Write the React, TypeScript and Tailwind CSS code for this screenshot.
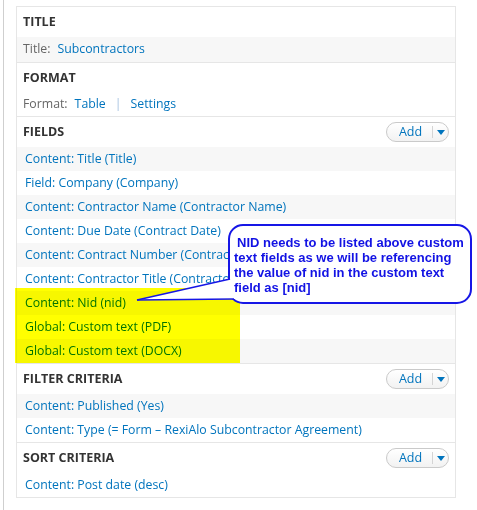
import React from 'react';

type Row = { text: string };

function AddButton() {
  return (
    <div className="flex h-[20px] w-[63px] items-center rounded-full border border-[#cacaca] bg-gradient-to-b from-white to-[#f2f2f2]">
      <span className="flex w-[45px] justify-center pl-[2px] text-[12.5px] leading-none text-[#0074bd]">Add</span>
      <span className="h-[12px] w-px bg-[#d4d4d4]" />
      <span className="flex flex-1 justify-center">
        <span className="h-0 w-0 border-x-[4px] border-t-[5px] border-x-transparent border-t-[#0074bd]" />
      </span>
    </div>
  );
}

function Header({ title, add }: { title: string; add?: boolean }) {
  return (
    <div className="flex h-[30px] items-center justify-between pl-[6px] pr-[6px]">
      <h3 className="text-[12.5px] font-bold uppercase text-[#333]">{title}</h3>
      {add && <AddButton />}
    </div>
  );
}

function LinkRows({ rows }: { rows: Row[] }) {
  return (
    <div>
      {rows.map((row, i) => (
        <div
          key={row.text}
          className={`flex h-[24px] items-center pl-[8px] text-[#0074bd] ${i % 2 === 0 ? 'bg-[#f7f7f7]' : 'bg-white'}`}
        >
          {row.text}
        </div>
      ))}
    </div>
  );
}

const fields: Row[] = [
  { text: 'Content: Title (Title)' },
  { text: 'Field: Company (Company)' },
  { text: 'Content: Contractor Name (Contractor Name)' },
  { text: 'Content: Due Date (Contract Date)' },
  { text: 'Content: Contract Number (Contract Number)' },
  { text: 'Content: Contractor Title (Contractor Title)' },
  { text: 'Content: Nid (nid)' },
  { text: 'Global: Custom text (PDF)' },
  { text: 'Global: Custom text (DOCX)' },
];

const filters: Row[] = [
  { text: 'Content: Published (Yes)' },
  { text: 'Content: Type (= Form – RexiAlo Subcontractor Agreement)' },
];

export default function App() {
  return (
    <div className="relative flex h-[510px] w-[477px] bg-white pl-[3px] font-['Open_Sans',sans-serif] text-[12.3px]">
      <div className="flex-1 border-l border-[#cfcfcf] pl-[12px] pt-[6px]">
        <div className="w-[440px] border border-[#e6e6e6]">
          <section className="border-b border-[#e6e6e6]">
            <Header title="Title" />
            <div className="flex h-[25px] items-center bg-[#f7f7f7] pl-[6px]">
              <span className="text-[#666]">Title:</span>
              <span className="ml-[7px] text-[#0074bd]">Subcontractors</span>
            </div>
          </section>

          <section className="border-b border-[#e6e6e6]">
            <Header title="Format" />
            <div className="flex h-[23px] items-center pl-[6px]">
              <span className="text-[#666]">Format:</span>
              <span className="ml-[7px] text-[#0074bd]">Table</span>
              <span className="ml-[9px] text-[#a8c4e2]">|</span>
              <span className="ml-[9px] text-[#0074bd]">Settings</span>
            </div>
          </section>

          <section className="border-b border-[#e6e6e6]">
            <Header title="Fields" add />
            <LinkRows rows={fields} />
          </section>

          <section className="border-b border-[#e6e6e6]">
            <Header title="Filter criteria" add />
            <LinkRows rows={filters} />
          </section>

          <section>
            <Header title="Sort criteria" add />
            <div className="flex h-[24px] items-center pl-[8px] text-[#0074bd]">Content: Post date (desc)</div>
          </section>
        </div>
      </div>

      {/* yellow highlight over the nid / custom text rows */}
      <div className="pointer-events-none absolute left-[15px] top-[288px] h-[75px] w-[225px] bg-[#ffff00] mix-blend-multiply" />

      {/* annotation callout */}
      <svg className="pointer-events-none absolute left-0 top-0" width="477" height="510">
        <rect x="229" y="225" width="242" height="78" rx="14" fill="white" stroke="#1616e6" strokeWidth="2" />
        <polygon points="231,279 137,300 235,299 240,290" fill="white" />
        <line x1="230" y1="279" x2="137" y2="300" stroke="#1616e6" strokeWidth="1.5" />
        <line x1="137" y1="300" x2="234" y2="299" stroke="#1616e6" strokeWidth="1.5" />
      </svg>
      <div className="absolute left-[234px] top-[235px] font-['Liberation_Sans',Arial,sans-serif] text-[13px] font-bold leading-[15px] text-[#1212e4]">
        <div className="pl-[3px]">NID needs to be listed above custom</div>
        <div>text fields as we will be referencing</div>
        <div>the value of nid in the custom text</div>
        <div>field as [nid]</div>
      </div>
    </div>
  );
}
